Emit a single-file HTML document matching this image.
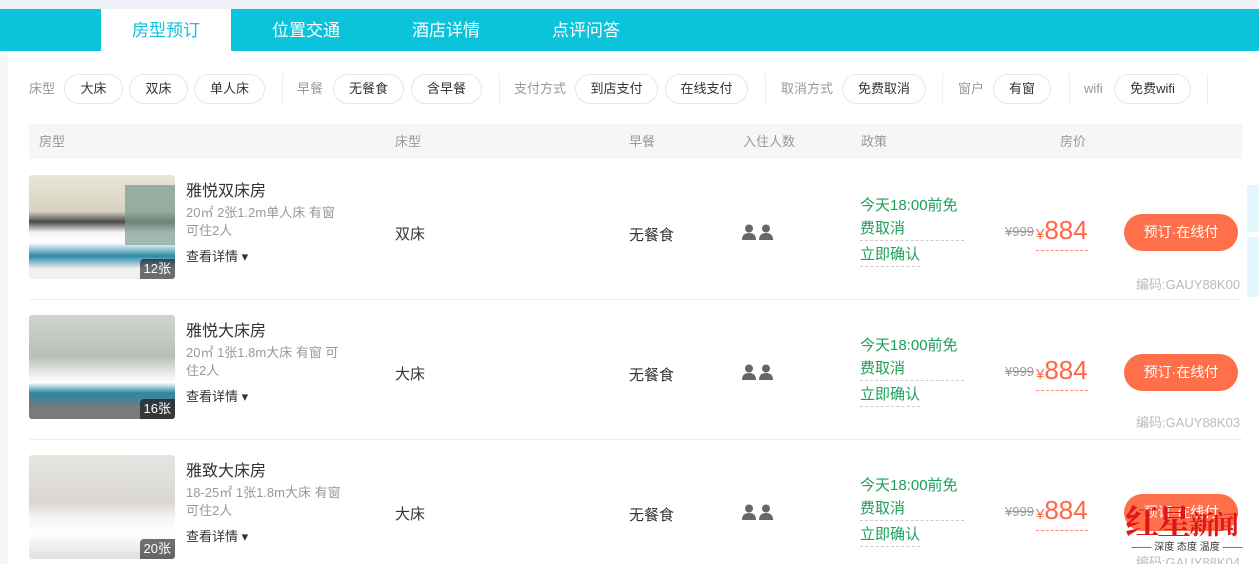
<!DOCTYPE html>
<html><head><meta charset="utf-8"><style>
*{margin:0;padding:0;box-sizing:border-box}
html,body{width:1259px;height:564px;overflow:hidden}
body{background:#fff;font-family:"Liberation Sans","Noto Sans CJK SC",sans-serif;position:relative}
.top{position:absolute;left:0;top:0;width:1259px;height:9px;background:#eef1f8}
.nav{position:absolute;left:0;top:9px;width:1259px;height:42px;background:#0cc3dc}
.nav span{position:absolute;top:0;line-height:44px;font-size:17px;color:#fff}
.nav .act{left:101px;width:130px;height:42px;background:#fff;color:#0cc3dc;text-align:center}
.lstrip{position:absolute;left:0;top:51px;width:8px;height:513px;background:#f5f5f5}
.f{position:absolute;top:74px;height:30px;font-size:13px;line-height:28px}
.lab{color:#999;line-height:30px}
.pill{border:1px solid #e6e6e6;border-radius:15px;text-align:center;color:#333}
.sep{position:absolute;top:74px;width:1px;height:30px;background:#eee}
.th{position:absolute;left:29px;top:124px;width:1213px;height:35px;background:#f6f6f6}
.th span{position:absolute;top:0;line-height:35px;font-size:13px;color:#999}
.row{position:absolute;left:29px;width:1213px;height:140px;border-bottom:1px solid #eee}
.img{position:absolute;left:0;top:0;width:146px;height:104px;border-radius:3px;overflow:hidden}
.cnt{position:absolute;right:0;bottom:0;background:rgba(0,0,0,.55);color:#fff;font-size:13px;padding:0 4px;line-height:20px;border-top-left-radius:4px}
.name{position:absolute;left:157px;font-size:16px;color:#333}
.desc{position:absolute;left:157px;width:160px;font-size:13px;line-height:18px;color:#999}
.more{position:absolute;left:157px;font-size:13px;color:#333}
.c{position:absolute;font-size:15px;color:#333}
.pol{position:absolute;left:831px;font-size:15px;color:#1aa05a;line-height:23px}
.pol .a{border-bottom:1px dashed #ccc;width:104px}
.pol .b{border-bottom:1px dashed #ccc;display:inline-block;margin-top:2px}
.old{position:absolute;left:976px;font-size:13px;color:#999;text-decoration:line-through}
.price{position:absolute;left:1007px;color:#ff6647;font-size:26px;border-bottom:1px dashed #ff8a70;line-height:30px}
.price small{font-size:15px}
.btn{position:absolute;left:1095px;width:114px;height:37px;border-radius:19px;background:#ff704a;color:#fff;font-size:14px;text-align:center;line-height:37px}
.code{position:absolute;left:1107px;font-size:13px;color:#bbb}
.ppl{position:absolute;left:713px}
</style></head><body>
<div class="top"></div>
<div class="nav"><span class="act">房型预订</span><span style="left:272px">位置交通</span><span style="left:412px">酒店详情</span><span style="left:552px">点评问答</span></div>
<div class="lstrip"></div>
<div class="f lab" style="left:29px">床型</div>
<div class="f pill" style="left:64px;width:59px">大床</div>
<div class="f pill" style="left:129px;width:59px">双床</div>
<div class="f pill" style="left:194px;width:71px">单人床</div>
<div class="sep" style="left:282px"></div>
<div class="f lab" style="left:297px">早餐</div>
<div class="f pill" style="left:333px;width:71px">无餐食</div>
<div class="f pill" style="left:411px;width:71px">含早餐</div>
<div class="sep" style="left:499px"></div>
<div class="f lab" style="left:514px">支付方式</div>
<div class="f pill" style="left:575px;width:83px">到店支付</div>
<div class="f pill" style="left:665px;width:83px">在线支付</div>
<div class="sep" style="left:765px"></div>
<div class="f lab" style="left:781px">取消方式</div>
<div class="f pill" style="left:842px;width:84px">免费取消</div>
<div class="sep" style="left:942px"></div>
<div class="f lab" style="left:958px">窗户</div>
<div class="f pill" style="left:993px;width:58px">有窗</div>
<div class="sep" style="left:1069px"></div>
<div class="f lab" style="left:1084px">wifi</div>
<div class="f pill" style="left:1114px;width:77px">免费wifi</div>
<div class="sep" style="left:1207px"></div>
<div class="th"><span style="left:10px">房型</span><span style="left:366px">床型</span><span style="left:600px">早餐</span><span style="left:714px">入住人数</span><span style="left:832px">政策</span><span style="left:1031px">房价</span></div>

<div class="row" style="top:160px">
<div class="img" style="top:15px;background:linear-gradient(180deg,#e9e6d8 0%,#d8d3c0 35%,#4a4a4a 45%,#f2f2f2 55%,#fff 65%,#2a8aa8 78%,#f0f0f0 90%);"><div style="position:absolute;right:0;top:10px;width:50px;height:60px;background:#7a9a90;opacity:.7"></div><span class="cnt">12张</span></div>
<div class="name" style="top:17px">雅悦双床房</div>
<div class="desc" style="top:44px">20㎡ 2张1.2m单人床 有窗可住2人</div>
<div class="more" style="top:86px">查看详情 ▾</div>
<div class="c" style="left:366px;top:63px">双床</div>
<div class="c" style="left:600px;top:64px">无餐食</div>
<svg class="ppl" style="top:64px" width="32" height="16" viewBox="0 0 32 16" fill="#666"><circle cx="7" cy="4.5" r="4"/><path d="M0 16q0-7 7-7t7 7z"/><circle cx="24" cy="4.5" r="4"/><path d="M17 16q0-7 7-7t7 7z"/></svg>
<div class="pol" style="top:34px"><div class="a">今天18:00前免<br>费取消</div><span class="b">立即确认</span></div>
<div class="old" style="top:64px">¥999</div>
<div class="price" style="top:55px"><small>¥</small>884</div>
<div class="btn" style="top:54px">预订·在线付</div>
<div class="code" style="top:114px">编码:GAUY88K00</div>
</div>

<div class="row" style="top:300px">
<div class="img" style="top:15px;background:linear-gradient(180deg,#cfd5d0 0%,#b8bfb8 40%,#e8e8e8 55%,#fff 65%,#2c86a4 75%,#7a7a7a 90%);"><span class="cnt">16张</span></div>
<div class="name" style="top:17px">雅悦大床房</div>
<div class="desc" style="top:44px">20㎡ 1张1.8m大床 有窗 可住2人</div>
<div class="more" style="top:86px">查看详情 ▾</div>
<div class="c" style="left:366px;top:63px">大床</div>
<div class="c" style="left:600px;top:64px">无餐食</div>
<svg class="ppl" style="top:64px" width="32" height="16" viewBox="0 0 32 16" fill="#666"><circle cx="7" cy="4.5" r="4"/><path d="M0 16q0-7 7-7t7 7z"/><circle cx="24" cy="4.5" r="4"/><path d="M17 16q0-7 7-7t7 7z"/></svg>
<div class="pol" style="top:34px"><div class="a">今天18:00前免<br>费取消</div><span class="b">立即确认</span></div>
<div class="old" style="top:64px">¥999</div>
<div class="price" style="top:55px"><small>¥</small>884</div>
<div class="btn" style="top:54px">预订·在线付</div>
<div class="code" style="top:112px">编码:GAUY88K03</div>
</div>

<div class="row" style="top:440px">
<div class="img" style="top:15px;background:linear-gradient(180deg,#e6e6e2 0%,#d9d6d0 45%,#f4f4f4 60%,#fff 75%,#e0e0e0 100%);"><span class="cnt">20张</span></div>
<div class="name" style="top:17px">雅致大床房</div>
<div class="desc" style="top:44px">18-25㎡ 1张1.8m大床 有窗可住2人</div>
<div class="more" style="top:86px">查看详情 ▾</div>
<div class="c" style="left:366px;top:63px">大床</div>
<div class="c" style="left:600px;top:64px">无餐食</div>
<svg class="ppl" style="top:64px" width="32" height="16" viewBox="0 0 32 16" fill="#666"><circle cx="7" cy="4.5" r="4"/><path d="M0 16q0-7 7-7t7 7z"/><circle cx="24" cy="4.5" r="4"/><path d="M17 16q0-7 7-7t7 7z"/></svg>
<div class="pol" style="top:34px"><div class="a">今天18:00前免<br>费取消</div><span class="b">立即确认</span></div>
<div class="old" style="top:64px">¥999</div>
<div class="price" style="top:55px"><small>¥</small>884</div>
<div class="btn" style="top:54px">预订·在线付</div>
<div class="code" style="top:112px">编码:GAUY88K04</div>
</div>

<div style="position:absolute;left:1247px;top:185px;width:12px;height:47px;background:#e3f6fb;border-radius:4px 0 0 4px"></div>
<div style="position:absolute;left:1247px;top:237px;width:12px;height:60px;background:#e3f6fb;border-radius:4px 0 0 4px"></div>
<div style="position:absolute;left:1125px;top:500px;font-size:34px;color:#e0151c;font-family:'Noto Serif CJK SC',serif;font-weight:bold;line-height:40px;letter-spacing:-2px">红星<span style="font-size:26px">新闻</span></div>
<div style="position:absolute;left:1125px;top:542px;width:124px;font-size:10px;color:#333;text-align:center;line-height:12px">—— 深度 态度 温度 ——</div>
</body></html>
